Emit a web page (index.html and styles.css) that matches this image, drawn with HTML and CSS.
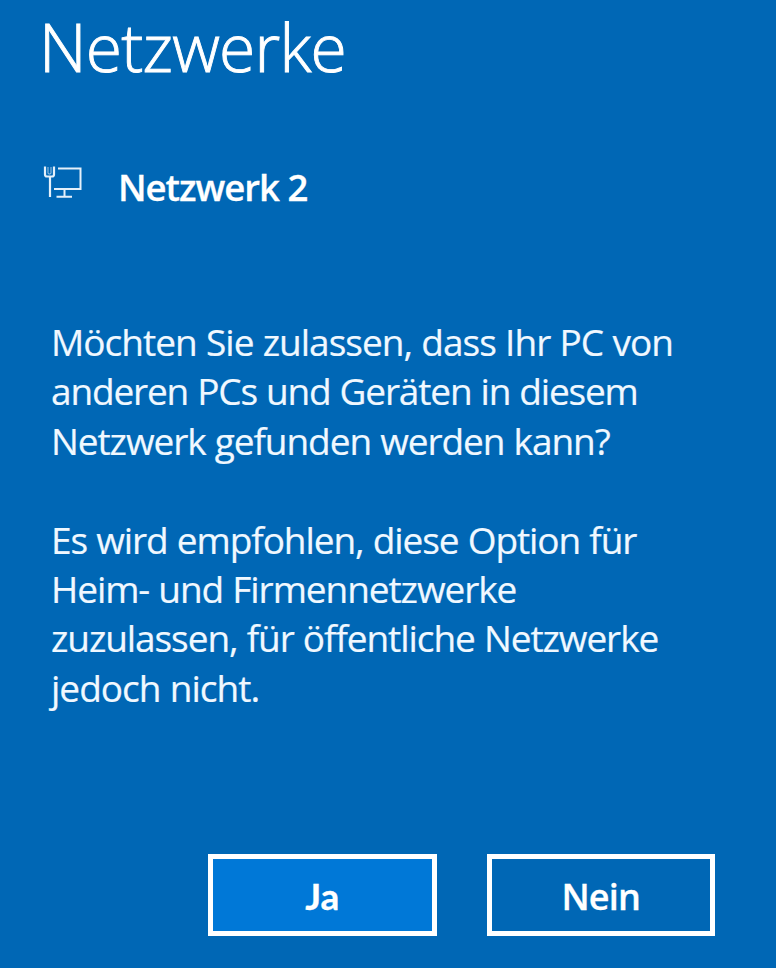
FILE: index.html
```html
<!DOCTYPE html>
<html lang="de">
<head>
    <meta charset="UTF-8">
    <meta name="viewport" content="width=device-width, initial-scale=1.0">
    <title>Netzwerke</title>
    <link rel="stylesheet" href="styles.css">
</head>
<body>
    <main class="panel">
        <h1 class="title">Netzwerke</h1>
        <div class="network">
            <svg class="network-icon" width="40" height="36" viewBox="0 0 40 36" fill="none" stroke="#e4f0fa">
                <!-- Stecker -->
                <path d="M2 1.500v8q0 2 2 2h5q2 0 2-2v-8M7 11.500v20.500" stroke-width="2.200"/>
                <path d="M5 2v6q0 1 1 1h1q1 0 1-1V2" stroke-width="1" stroke-opacity="0.7"/>
                <!-- Monitor -->
                <path d="M15 3.500h22.500v20.500H11M21.500 24v7.500M13.500 31.700H29" stroke-width="2"/>
            </svg>
            <h2 class="network-name">Netzwerk 2</h2>
        </div>
        <div class="message">
            <p><span class="normal">Möchten Sie zulassen, dass Ihr PC von</span><br>
            <span class="tight">anderen PCs und Geräten in diesem</span><br>
            <span class="narrow">Netzwerk gefunden werden kann?</span></p>
            <p><span class="narrow">Es wird empfohlen, diese Option für</span><br>
            <span class="narrow">Heim- und Firmennetzwerke</span><br>
            <span class="narrow">zuzulassen, für öffentliche Netzwerke</span><br>
            <span class="normal">jedoch nicht.</span></p>
        </div>
        <div class="buttons">
            <button class="btn btn-primary">Ja</button>
            <button class="btn">Nein</button>
        </div>
    </main>
</body>
</html>
```
FILE: styles.css
```css
* {
    box-sizing: border-box;
}
body {
    margin: 0;
    background-color: #0067b5;
    color: #fff;
    font-family: 'Open Sans', 'Noto Sans', sans-serif;
}
.panel {
    height: 968px;
    padding-top: 6px;
    overflow: hidden;
}
.title {
    margin: 0 0 76px 39px;
    font-size: 66px;
    font-weight: 300;
    line-height: 80px;
    letter-spacing: -0.8px;
    -webkit-text-stroke: 0.9px #fff;
}
.network {
    display: flex;
    align-items: flex-start;
    height: 50px;
    padding-left: 43px;
}
.network-icon {
    margin-top: 3px;
}
.network-name {
    margin: 0 0 0 35px;
    font-size: 36.500px;
    font-weight: 600;
    line-height: 50px;
    letter-spacing: -1px;
    -webkit-text-stroke: 0.3px #fff;
}
.message {
    margin: 105px 0 0 51px;
    font-size: 37px;
    line-height: 49.4px;
    white-space: nowrap;
    color: #f0f8ff;
    word-spacing: 0.6px;
    -webkit-text-stroke: 0.2px #f0f8ff;
}
.message p {
    margin: 0 0 49.4px;
}
.normal {
    letter-spacing: -0.98px;
}
.narrow {
    letter-spacing: -1.07px;
}
.tight {
    letter-spacing: -1.16px;
}
.buttons {
    display: flex;
    gap: 50px;
    margin: 142px 0 0 208px;
}
.btn {
    width: 228.500px;
    height: 82px;
    padding: 3px 0 0;
    border: 5px solid #fff;
    background-color: transparent;
    color: #fff;
    font-family: inherit;
    font-size: 36px;
    font-weight: 600;
    letter-spacing: -0.8px;
    -webkit-text-stroke: 0.3px #fff;
}
.btn-primary {
    padding-top: 1px;
    background-color: #0078d7;
    font-family: Lato, 'Open Sans', sans-serif;
    font-size: 37px;
    font-weight: 700;
    letter-spacing: 0;
}
```
